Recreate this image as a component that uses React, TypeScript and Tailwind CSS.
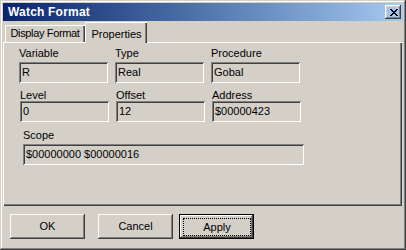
import React from 'react';

const raised =
  'shadow-[inset_-1px_-1px_#404040,inset_1px_1px_#ffffff,inset_-2px_-2px_#808080,inset_2px_2px_#d4d0c8]';
const sunken =
  'shadow-[inset_1px_1px_#808080,inset_-1px_-1px_#ffffff,inset_2px_2px_#404040,inset_-2px_-2px_#d4d0c8]';

function CloseGlyph() {
  const rows = ['11000011', '01100110', '00111100', '00011000', '00111100', '01100110', '11000011'];
  return (
    <svg width="8" height="7" viewBox="0 0 8 7" shapeRendering="crispEdges">
      {rows.map((r, y) =>
        r.split('').map((c, x) => (c === '1' ? <rect key={`${x}-${y}`} x={x} y={y} width="1" height="1" fill="#000" /> : null)),
      )}
    </svg>
  );
}

function Field({ label, value, w = 'w-[89px]', tight }: { label: string; value: string; w?: string; tight?: boolean }) {
  return (
    <div className={`flex flex-col ${w}`}>
      <div className={tight ? 'h-[12px] leading-[12px]' : 'h-[13px] leading-[13px] mb-[2px]'}>{label}</div>
      <div className={`h-[21px] flex items-center pl-[3px] ${sunken}`}>{value}</div>
    </div>
  );
}

function Button({ children, isDefault }: { children: React.ReactNode; isDefault?: boolean }) {
  if (isDefault) {
    return (
      <button type="button" className="w-[75px] h-[25px] border border-black flex">
        <span className={`flex-1 flex pl-[3px] pt-[3px] pr-[2px] pb-[2px] ${raised}`}>
          <span className="flex-1 flex items-center justify-center border border-dotted border-black">{children}</span>
        </span>
      </button>
    );
  }
  return (
    <button type="button" className={`w-[75px] h-[25px] flex items-center justify-center ${raised}`}>
      {children}
    </button>
  );
}

export default function App() {
  return (
    <div className="w-[406px] h-[250px] bg-[#d4d0c8] p-[3px] flex flex-col text-[11px] text-black font-['Liberation_Sans',Arial,sans-serif] shadow-[inset_-1px_-1px_#404040,inset_1px_1px_#d4d0c8,inset_-2px_-2px_#808080,inset_2px_2px_#ffffff]">
      <div className="h-[18px] flex items-center bg-linear-to-r from-[#0a246a] to-[#a6caf0] pl-[5px] pr-[2px]">
        <span className="flex-1 font-bold text-white text-[12px] tracking-[0.2px]">Watch Format</span>
        <button type="button" className={`w-[16px] h-[14px] flex items-center justify-center pl-[1px] ${raised}`}>
          <CloseGlyph />
        </button>
      </div>

      <div className="h-[21px] flex items-end pl-[2px]">
        <div className="w-[80px] h-[17px] flex items-center justify-center pb-[1px] pr-[1px] tracking-[-0.35px] whitespace-nowrap rounded-tl-[2px] border-l border-t border-white shadow-[inset_-1px_0_#404040,inset_-2px_0_#808080]">
          Display Format
        </div>
        <div className="relative z-10 -mb-[1px] w-[62px] h-[21px] flex items-start justify-center pt-[3px] bg-[#d4d0c8] rounded-tl-[2px] border-l border-t border-white shadow-[inset_-1px_0_#404040,inset_-2px_0_#808080]">
          Properties
        </div>
      </div>

      <div className="h-[164px] mr-[1px] flex flex-col pt-[5px] shadow-[inset_1px_1px_#ffffff,inset_-1px_-1px_#404040,inset_-2px_-2px_#808080]">
        <div className="flex gap-[7px] pl-[16px]">
          <Field label="Variable" value="R" />
          <Field label="Type" value="Real" />
          <Field label="Procedure" value="Gobal" />
        </div>
        <div className="flex gap-[7px] pl-[17px] mt-[6px]">
          <Field label="Level" value="0" tight />
          <Field label="Offset" value="12" tight />
          <Field label="Address" value="$00000423" tight />
        </div>
        <div className="flex pl-[20px] mt-[7px]">
          <Field label="Scope" value="$00000000 $00000016" w="w-[281px]" />
        </div>
      </div>

      <div className="flex mt-[8px] pl-[7px]">
        <Button>OK</Button>
        <div className="w-[13px]" />
        <Button>Cancel</Button>
        <div className="w-[6px]" />
        <Button isDefault>Apply</Button>
      </div>
    </div>
  );
}
